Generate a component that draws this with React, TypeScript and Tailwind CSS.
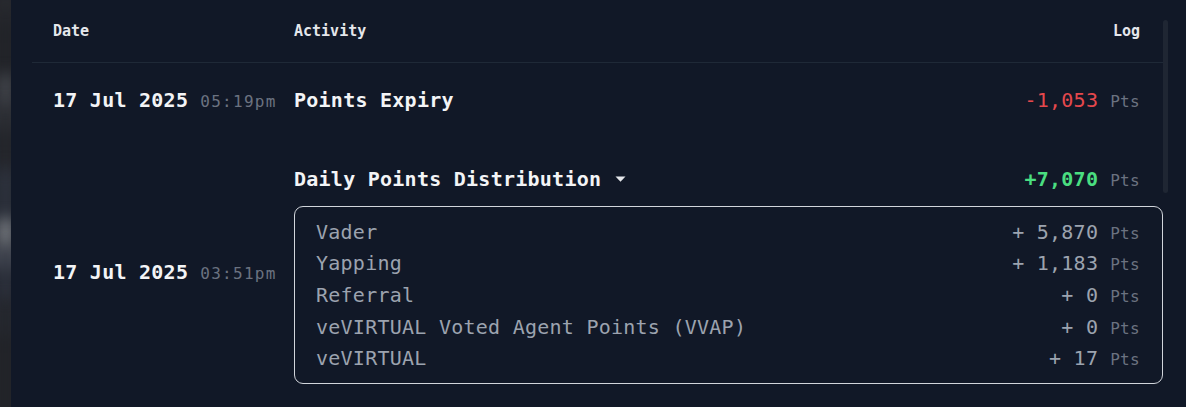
import React from "react";

const mono = "font-['DejaVu_Sans_Mono','Liberation_Mono',monospace]";

const breakdown = [
  { label: "Vader", value: "5,870" },
  { label: "Yapping", value: "1,183" },
  { label: "Referral", value: "0" },
  { label: "veVIRTUAL Voted Agent Points (VVAP)", value: "0" },
  { label: "veVIRTUAL", value: "17" },
];

// blurred bit of the page behind the panel
const strip = [
  { h: "h-[20px]", c: "bg-[#2e3036]" },
  { h: "h-[63px]", c: "bg-[#222429]" },
  { h: "h-[37px]", c: "bg-[#44474e]" },
  { h: "h-[60px]", c: "bg-[#25272d]" },
  { h: "h-[47px]", c: "bg-[#2e3440]" },
  { h: "h-[33px]", c: "bg-[#7a7d83]" },
  { h: "h-[60px]", c: "bg-[#2e3340]" },
  { h: "h-[87px]", c: "bg-[#222429]" },
];

const DateCell = ({ day, time }: { day: string; time: string }) => (
  <div className="w-[241px] shrink-0 pl-[21px] flex items-baseline whitespace-nowrap">
    <span className="text-[20px] tracking-[0.25px] font-bold text-[#f3f4f6]">{day}</span>
    <span className="ml-[12px] text-[16px] tracking-[1.3px] text-[#6b7280]">{time}</span>
  </div>
);

const Pts = ({ value, color }: { value: string; color: string }) => (
  <div className="flex items-baseline whitespace-nowrap">
    <span className={`text-[20px] tracking-[0.25px] ${color}`}>{value}</span>
    <span className="ml-[12px] text-[16px] tracking-[0.3px] text-[#6b7280]">Pts</span>
  </div>
);

const App = () => {
  return (
    <div className={`w-[1186px] h-[407px] flex overflow-hidden bg-[#111827] ${mono}`}>
      <div className="w-[11px] shrink-0 flex flex-col overflow-hidden bg-[#222429]">
        {strip.map((s, i) => (
          <div key={i} className={`${s.h} ${s.c} blur-[5px] scale-150`} />
        ))}
      </div>

      <div className="flex-1 relative">
        {/* scrollbar */}
        <div className="absolute left-[1152px] top-[20px] w-[5px] h-[173px] rounded-full bg-[#1f2633]" />

        <div className="ml-[21px] w-[1131px]">
          {/* Header */}
          <div className="h-[63px] flex items-center border-b border-[#1f2937] text-[15px] font-bold text-[#e5e7eb]">
            <div className="w-[241px] pl-[21px]">Date</div>
            <div className="flex-1 pl-[21px]">Activity</div>
            <div className="pr-[23px]">Log</div>
          </div>

          {/* Row 1 */}
          <div className="h-[74px] flex items-center">
            <DateCell day="17 Jul 2025" time="05:19pm" />
            <div className="flex-1 pl-[21px] pr-[23px] flex items-center justify-between">
              <span className="text-[20px] tracking-[0.25px] font-bold text-[#f3f4f6]">Points Expiry</span>
              <Pts value="-1,053" color="text-[#e5484d]" />
            </div>
          </div>

          {/* Row 2 */}
          <div className="flex items-center">
            <DateCell day="17 Jul 2025" time="03:51pm" />
            <div className="flex-1 pl-[21px] pt-[27px] pb-[23px]">
              <div className="h-[30px] pr-[23px] flex items-center justify-between">
                <div className="flex items-center">
                  <span className="text-[20px] tracking-[0.25px] font-bold text-[#f3f4f6]">Daily Points Distribution</span>
                  <svg width="11" height="6" viewBox="0 0 11 6" className="ml-[14px]">
                    <path d="M0.5 0.5h10L5.5 5.8z" fill="#e5e7eb" />
                  </svg>
                </div>
                <Pts value="+7,070" color="text-[#4ade80] font-bold" />
              </div>
              <div className="mt-[12px] border border-[#d1d5db] rounded-[9px] pl-[21px] pr-[22px] py-[9px]">
                {breakdown.map((b) => (
                  <div key={b.label} className="h-[31.6px] flex items-center justify-between text-[#9ca3af]">
                    <span className="text-[20px] tracking-[0.25px]">{b.label}</span>
                    <div className="flex items-baseline whitespace-nowrap">
                      <span className="text-[20px] tracking-[0.25px]">+ {b.value}</span>
                      <span className="ml-[12px] text-[16px] tracking-[0.3px] text-[#6b7280]">Pts</span>
                    </div>
                  </div>
                ))}
              </div>
            </div>
          </div>
        </div>
      </div>
    </div>
  );
};

export default App;
